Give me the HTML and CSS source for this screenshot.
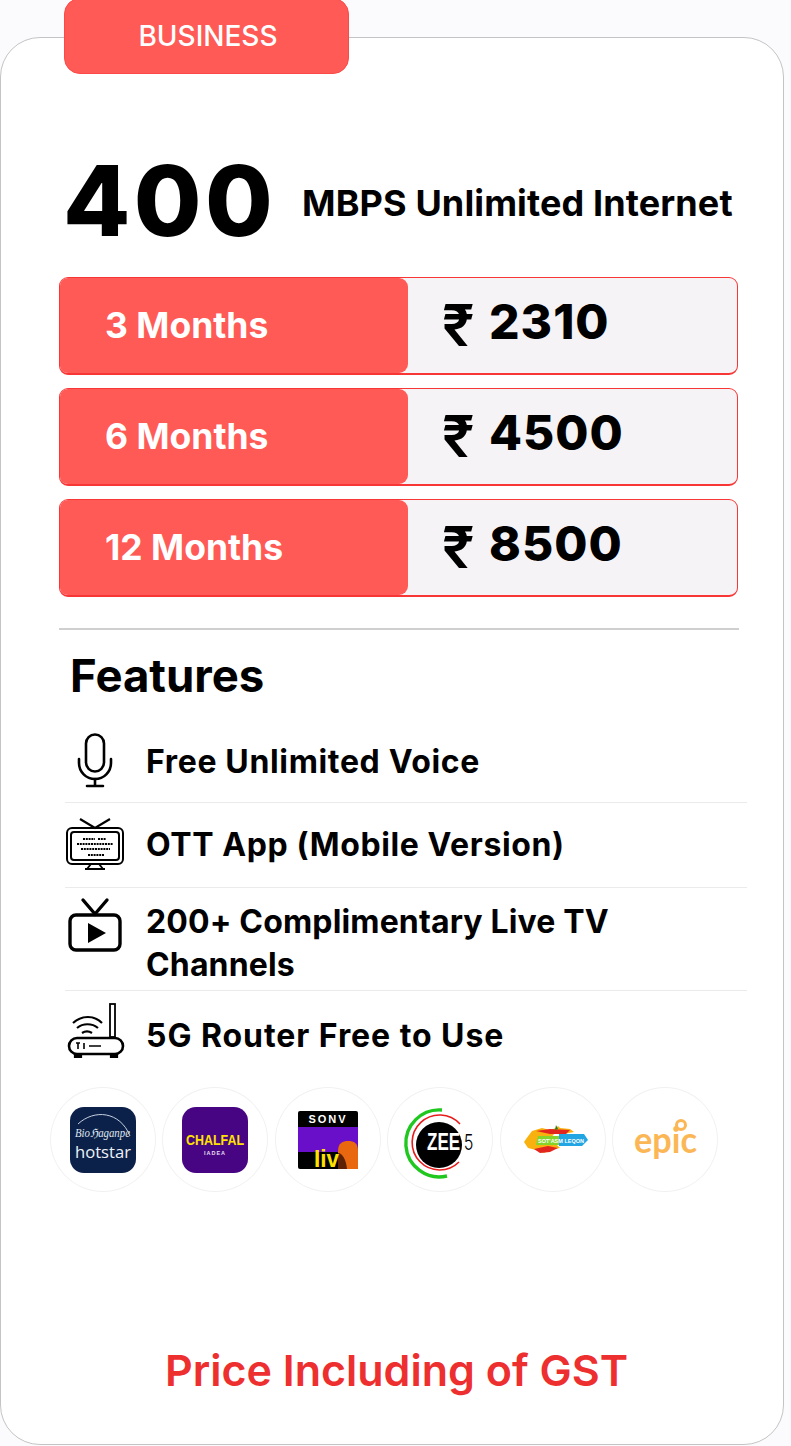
FILE: index.html
```html
<!DOCTYPE html>
<html lang="en">
<head>
<meta charset="utf-8">
<title>Business plan</title>
<link rel="stylesheet" href="styles.css">
</head>
<body>
<main class="card">
  <div class="tab">BUSINESS</div>
  <header class="speed">
    <span class="speed-num">400</span>
    <span class="speed-text">MBPS Unlimited Internet</span>
  </header>
  <section class="prices">
    <div class="price-row">
      <div class="term">3 Months</div>
      <div class="amount"><span class="rupee">₹</span>2310</div>
    </div>
    <div class="price-row">
      <div class="term">6 Months</div>
      <div class="amount"><span class="rupee">₹</span>4500</div>
    </div>
    <div class="price-row">
      <div class="term">12 Months</div>
      <div class="amount"><span class="rupee">₹</span>8500</div>
    </div>
  </section>
  <hr class="rule">
  <h2 class="features-title">Features</h2>
  <ul class="features">
    <li class="feature f-voice">
      <svg class="ficon" viewBox="0 0 60 56" fill="none" stroke="#000" stroke-width="2.6" stroke-linecap="round">
        <rect x="21" y="1.5" width="18" height="37" rx="9"/>
        <path d="M14 26v4a16 16 0 0 0 32 0v-4"/>
        <path d="M30 46v7M22 53h16"/>
      </svg>
      <span>Free Unlimited Voice</span>
    </li>
    <li class="feature f-ott">
      <svg class="ficon" viewBox="0 0 60 56" fill="none" stroke="#000" stroke-width="2">
        <path d="M15 2l15 9 15-9" stroke-width="2.2"/>
        <rect x="2" y="11" width="56" height="36" rx="5"/>
        <rect x="6" y="15" width="48" height="28" rx="3"/>
        <path d="M18 22h12M33 22h8M12 27h36M16 32h29M23 38h16" stroke-width="1.8" stroke-dasharray="2 .8"/>
        <path d="M22 52l4-5h8l4 5zM20 52h20" stroke-width="1.8"/>
      </svg>
      <span>OTT App (Mobile Version)</span>
    </li>
    <li class="feature f-tv">
      <svg class="ficon" viewBox="0 0 60 56" fill="none" stroke="#000" stroke-width="3.4">
        <path d="M18 1l12 14L42 1" stroke-linecap="round"/>
        <rect x="5" y="16" width="50" height="35" rx="6"/>
        <path d="M23 24l18 10-18 10z" fill="#000" stroke="none"/>
      </svg>
      <span>200+ Complimentary Live TV Channels</span>
    </li>
    <li class="feature f-router">
      <svg class="ficon" viewBox="0 0 60 56" fill="none" stroke="#000" stroke-width="2.2">
        <rect x="45" y="-3" width="5" height="33" stroke-width="1.8"/>
        <path d="M8 16c9-8 21-8 29 0M12 21c6-5 15-5 21 0M17 26c3-2 7-2 10 0"/>
        <rect x="4" y="31" width="54" height="16" rx="8" stroke-width="2.6"/>
        <path d="M10 48h6v2h-6zM46 48h6v2h-6z" fill="#000"/>
        <path d="M11 36h4M13 36v6M19 36v6M24 39h12" stroke-width="1.6"/>
      </svg>
      <span>5G Router Free to Use</span>
    </li>
  </ul>
  <div class="apps">
    <div class="app">
      <svg class="logo logo-hotstar" viewBox="0 0 66 66">
        <rect width="66" height="66" rx="14" fill="#0c2149"/>
        <path d="M8 17C24 2 50 4 60 29" fill="none" stroke="#c6d0e0" stroke-width="1"/>
        <text x="5" y="30" class="lt-script" textLength="55" lengthAdjust="spacingAndGlyphs">Bioℌaganpe</text>
        <text x="33" y="51" class="lt-hotstar" text-anchor="middle" textLength="56" lengthAdjust="spacingAndGlyphs">hotstar</text>
      </svg>
    </div>
    <div class="app">
      <svg class="logo logo-chalfal" viewBox="0 0 66 66">
        <rect width="66" height="66" rx="14" fill="#470583"/>
        <text x="33" y="38" class="lt-chalfal" text-anchor="middle" textLength="58" lengthAdjust="spacingAndGlyphs">CHALFAL</text>
        <text x="33" y="48" class="lt-iadea" text-anchor="middle">IADEA</text>
      </svg>
    </div>
    <div class="app">
      <svg class="logo logo-sony" viewBox="0 0 60 58">
        <rect width="60" height="58" rx="2" fill="#000"/>
        <rect y="16" width="60" height="25" fill="#6a0fc9"/>
        <text x="30" y="12" class="lt-sonv" text-anchor="middle">SONV</text>
        <path d="M40 58V40c0-8 5-10 10-10 6 0 10 2 10 10v18z" fill="#e8670f"/>
        <path d="M40 58V42c4 0 8 6 9 16z" fill="#5d2106"/>
        <text x="16" y="56" class="lt-liv" textLength="25" lengthAdjust="spacingAndGlyphs">Iiv</text>
      </svg>
    </div>
    <div class="app">
      <svg class="logo logo-zee" viewBox="0 0 76 76">
        <path d="M40 8A33.5 33.5 0 1 0 45 74" fill="none" stroke="#1fc71f" stroke-width="3.4"/>
        <path d="M58 22A27.5 27.5 0 1 0 57 60" fill="none" stroke="#e81c1c" stroke-width="1.6"/>
        <circle cx="37" cy="43" r="23" fill="#000"/>
        <text class="lt-zee" transform="translate(25 48) scale(.74 1)">ZEE<tspan class="lt-five" dx="5">5</tspan></text>
      </svg>
    </div>
    <div class="app">
      <svg class="logo logo-splash" viewBox="-3 0 64 30">
        <path d="M2 14L8 6l10-3 8 2 6-2 2-2 2 2 10 1 4 3-10 2H30l-6 8 8 2 4 4-10 2-6 3-8-3-8-2-4-6z" fill="#f9b10f"/>
        <path d="M12 6l14-2 20 1-4 4H26zM10 24l14-3 10 2-8 4-10 1z" fill="#e3261d"/>
        <path d="M14 11h21v9H12z" fill="#86d42a"/>
        <path d="M35 9h25l4 6-6 6H35z" fill="#22a5e3"/>
        <path d="M32 0l2 4-3 1z" fill="#1d7d2d"/>
        <text x="37" y="18" class="lt-splash" text-anchor="middle" textLength="46" lengthAdjust="spacingAndGlyphs">SOT'ASM LEQON</text>
      </svg>
    </div>
    <div class="app">
      <svg class="logo logo-epic" viewBox="0 0 66 42">
        <text x="2" y="34" class="lt-epic" textLength="63" lengthAdjust="spacingAndGlyphs">epic</text>
        <circle cx="49" cy="6" r="4.5" fill="#fff" stroke="#fbb756" stroke-width="3"/>
      </svg>
    </div>
  </div>
  <p class="gst">Price Including of GST</p>
</main>
</body>
</html>
```
FILE: styles.css
```css
* { box-sizing: border-box; }
html, body { margin: 0; padding: 0; }
body {
  width: 791px;
  height: 1446px;
  overflow: hidden;
  background: #fbfbfd;
  font-family: Inter, "Liberation Sans", sans-serif;
  color: #000;
}
.card {
  position: relative;
  margin: 37px 0 0 0;
  width: 784px;
  height: 1408px;
  background: #fff;
  border: 1px solid #c4c4c4;
  border-radius: 40px;
  padding: 0 0 0 58px;
}
.tab {
  position: absolute;
  left: 63px;
  top: -40px;
  width: 285px;
  height: 76px;
  background: #ff5a55;
  border: 1px solid #fb4a47;
  border-radius: 16px;
  color: #fff;
  font-size: 28px;
  font-weight: 500;
  display: flex;
  align-items: flex-end;
  justify-content: center;
  padding: 0 0 21px 3px;
  line-height: 32px;
}
.speed {
  display: flex;
  align-items: center;
  height: 240px;
  padding: 85px 0 0 4px;
}
.speed-num {
  font-size: 98px;
  font-weight: 800;
  line-height: 1;
  width: 239px;
  letter-spacing: 3.4px;
}
.speed-text {
  margin-top: 4px;
  font-size: 36px;
  font-weight: 700;
  white-space: nowrap;
  letter-spacing: 0.12px;
}
.prices { display: flex; flex-direction: column; gap: 13px; margin-top: -1px; width: 679px; }
.price-row {
  display: flex;
  height: 98px;
  background: #f6f3f7;
  border: 1px solid #f93636;
  border-bottom-width: 2px;
  border-radius: 9px;
  overflow: hidden;
}
.term {
  width: 348px;
  background: #ff5a55;
  border-radius: 0 9px 9px 0;
  color: #fff;
  font-size: 35.5px;
  font-weight: 700;
  display: flex;
  align-items: center;
  padding: 0 0 0 45px;
}
.amount {
  display: flex;
  align-items: center;
  padding: 0 0 8px 34px;
  font-size: 48px;
  font-weight: 800;
  letter-spacing: 1px;
}
.rupee {
  width: 47px;
  margin-top: 6px;
  font-family: Inter, sans-serif;
  font-weight: 600;
  font-size: 58px;
  line-height: 1;
}
.rule {
  margin: 31px 0 0 0;
  width: 680px;
  border: 0;
  border-top: 2px solid #cfcfcf;
}
.features-title {
  margin: 21px 0 0 11px;
  font-size: 45.5px;
  line-height: 50px;
  font-weight: 700;
}
.features {
  list-style: none;
  margin: 17px 0 0 6px;
  padding: 0;
  width: 682px;
}
.feature {
  display: flex;
  align-items: center;
  gap: 21px;
  border-bottom: 1px solid #ebebeb;
  font-size: 32px;
  font-weight: 700;
  line-height: 43px;
}
.feature:last-child { border-bottom: 0; }
.feature span { max-width: 500px; }
.f-voice { height: 85px; padding-top: 2px; letter-spacing: 0.65px; }
.f-ott { height: 85px; padding-bottom: 2px; letter-spacing: 0.6px; }
.f-ott .ficon { margin-top: 2px; }
.f-tv { height: 103px; align-items: flex-start; padding-top: 12px; letter-spacing: 0.15px; }
.f-tv .ficon { margin-top: -1px; }
.f-router { height: 90px; padding-bottom: 2px; letter-spacing: 0.95px; }
.ficon { width: 60px; height: 56px; flex: none; overflow: visible; }
.apps {
  display: flex;
  gap: 6.4px;
  margin: 6px 0 0 -9px;
}
.app {
  width: 106px;
  height: 105px;
  border-radius: 50%;
  border: 1px solid #f1f1f1;
  display: flex;
  align-items: center;
  justify-content: center;
  flex: none;
}
.logo { display: block; overflow: visible; }
.logo-hotstar { width: 66px; height: 66px; }
.logo-chalfal { width: 66px; height: 66px; }
.logo-sony { width: 60px; height: 58px; }
.logo-zee { width: 76px; height: 76px; }
.logo-splash { width: 64px; height: 30px; }
.logo-epic { width: 66px; height: 42px; }
.lt-script { font-family: "Liberation Serif", serif; font-style: italic; font-size: 12px; fill: #dfe5ef; }
.lt-hotstar { font-family: "Open Sans", sans-serif; font-size: 16.5px; fill: #eef2f7; }
.lt-chalfal { font-family: "Liberation Sans", sans-serif; font-weight: 700; font-size: 15px; fill: #ffe100; }
.lt-iadea { font-family: "Liberation Sans", sans-serif; font-weight: 700; font-size: 5.5px; letter-spacing: 1px; fill: #e8def2; }
.lt-sonv { font-family: "Liberation Sans", sans-serif; font-weight: 700; font-size: 11px; letter-spacing: 2px; fill: #fff; }
.lt-liv { font-family: "Liberation Sans", sans-serif; font-weight: 700; font-size: 24px; fill: #ffe100; }
.lt-zee { font-family: "Liberation Sans", sans-serif; font-weight: 700; font-size: 23px; fill: #fff; }
.lt-five { font-family: Inter, sans-serif; font-weight: 300; font-size: 22px; fill: #000; }
.lt-splash { font-family: "Liberation Sans", sans-serif; font-weight: 700; font-size: 5.5px; fill: #fff; }
.lt-epic { font-family: Lato, sans-serif; font-weight: 700; font-size: 36px; fill: #fbb756; }
.gst {
  margin: 150px 0 0 0;
  width: 675px;
  text-align: center;
  color: #ee2f2f;
  font-size: 43px;
  font-weight: 600;
  line-height: 56px;
}
```
